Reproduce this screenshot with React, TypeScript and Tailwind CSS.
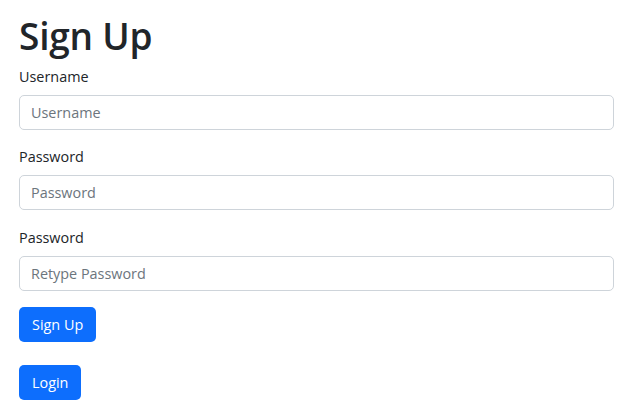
import { useState } from 'react'

const Field = ({
  label,
  placeholder,
  type = 'text',
  className = '',
}: {
  label: string
  placeholder: string
  type?: string
  className?: string
}) => {
  const [value, setValue] = useState('')
  return (
    <div className={`mb-[14px] ${className}`}>
      <label className="mb-[7px] block h-[24px] text-[14.4px] leading-[25px] text-[#212529]">{label}</label>
      <input
        type={type}
        value={value}
        onChange={(e) => setValue(e.target.value)}
        placeholder={placeholder}
        className="block h-[35px] w-full rounded-[5px] border border-[#ced4da] bg-white px-[11px] text-[14.4px] text-[#212529] outline-none placeholder:text-[#6c757d]"
      />
    </div>
  )
}

const App = () => {
  return (
    <div
      className="min-h-screen bg-white pl-[19px] pr-[18px] pt-[14px] text-[#212529]"
      style={{ fontFamily: '"Open Sans", sans-serif' }}
    >
      <h1 className="mb-[7px] text-[37px] font-semibold leading-[43px] tracking-[-0.2px]">Sign Up</h1>
      <form onSubmit={(e) => e.preventDefault()}>
        <Field label="Username" placeholder="Username" />
        <Field label="Password" placeholder="Password" type="password" />
        <Field label="Password" placeholder="Retype Password" type="password" className="pt-px" />
        <div className="flex flex-col items-start gap-[23px] pt-[2px]">
          <button className="h-[35px] rounded-[5px] bg-[#0d6efd] px-[13px] text-[14.4px] text-white">Sign Up</button>
          <button className="h-[35px] rounded-[5px] bg-[#0d6efd] px-[13px] text-[14.4px] text-white">Login</button>
        </div>
      </form>
    </div>
  )
}

export default App
